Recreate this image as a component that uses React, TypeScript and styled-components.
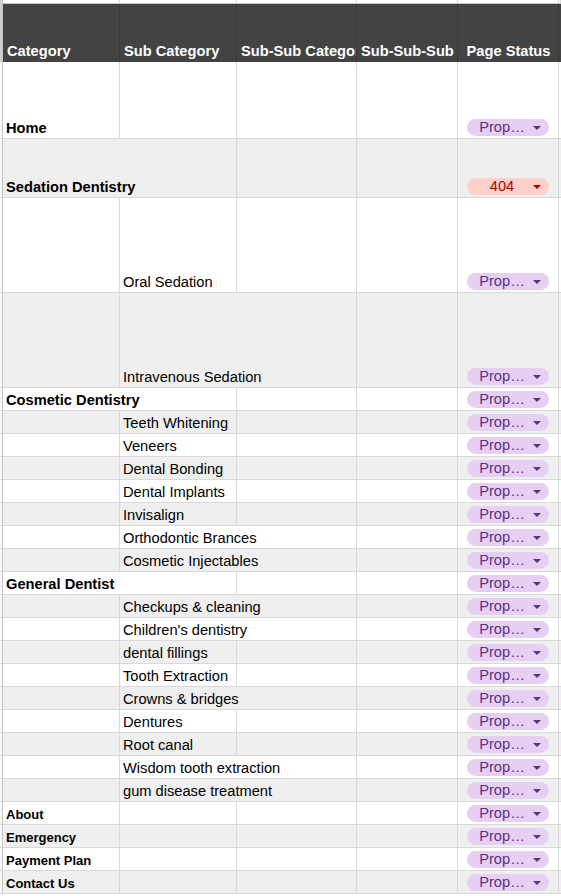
import React from 'react';
import styled, { createGlobalStyle, css } from 'styled-components';

type Status = 'prop' | '404' | null;

type RowData = {
  cat?: string;
  sub?: string;
  span?: boolean; // text runs over the empty cell to its right
  small?: boolean;
  h?: number;
  status?: Status;
};

const rows: RowData[] = [
  { cat: 'Home', h: 77, status: 'prop' },
  { cat: 'Sedation Dentistry', span: true, h: 59, status: '404' },
  { sub: 'Oral Sedation', h: 95, status: 'prop' },
  { sub: 'Intravenous Sedation', span: true, h: 95, status: 'prop' },
  { cat: 'Cosmetic Dentistry', span: true, status: 'prop' },
  { sub: 'Teeth Whitening', status: 'prop' },
  { sub: 'Veneers', status: 'prop' },
  { sub: 'Dental Bonding', status: 'prop' },
  { sub: 'Dental Implants', status: 'prop' },
  { sub: 'Invisalign', status: 'prop' },
  { sub: 'Orthodontic Brances', span: true, status: 'prop' },
  { sub: 'Cosmetic Injectables', span: true, status: 'prop' },
  { cat: 'General Dentist', span: true, status: 'prop' },
  { sub: 'Checkups & cleaning', span: true, status: 'prop' },
  { sub: "Children's dentistry", span: true, status: 'prop' },
  { sub: 'dental fillings', status: 'prop' },
  { sub: 'Tooth Extraction', status: 'prop' },
  { sub: 'Crowns & bridges', span: true, status: 'prop' },
  { sub: 'Dentures', status: 'prop' },
  { sub: 'Root canal', status: 'prop' },
  { sub: 'Wisdom tooth extraction', span: true, status: 'prop' },
  { sub: 'gum disease treatment', span: true, status: 'prop' },
  { cat: 'About', small: true, status: 'prop' },
  { cat: 'Emergency', small: true, status: 'prop' },
  { cat: 'Payment Plan', small: true, status: 'prop' },
  { cat: 'Contact Us', small: true, status: 'prop' },
];

const App = () => {
  return (
    <>
      <GlobalStyle />
      <Sheet>
        <Row $h={4}>
          <Gutter $top />
          <TopCell />
          <TopCell />
          <TopCell />
          <TopCell />
          <TopCell />
          <TopCell />
        </Row>
        <Row $h={58}>
          <Gutter $top />
          <HeadCell>Category</HeadCell>
          <HeadCell>Sub Category</HeadCell>
          <HeadCell>Sub-Sub Category</HeadCell>
          <HeadCell>Sub-Sub-Sub</HeadCell>
          <HeadCell $center>Page Status</HeadCell>
          <HeadCell />
        </Row>
        {rows.map((r, i) => {
          const band = i % 2 === 1;
          return (
            <Row key={i} $h={r.h ?? 23}>
              <Gutter />
              {r.cat !== undefined ? (
                <>
                  <Cell $band={band} $bold $small={r.small} $span={r.span}>
                    {r.cat}
                  </Cell>
                  {!r.span && <Cell $band={band} />}
                  <Cell $band={band} />
                </>
              ) : (
                <>
                  <Cell $band={band} />
                  <Cell $band={band} $span={r.span}>
                    {r.sub}
                  </Cell>
                  {!r.span && <Cell $band={band} />}
                </>
              )}
              <Cell $band={band} />
              <Cell $band={band} $center>
                {r.status && <Chip status={r.status} />}
              </Cell>
              <Cell $band={band} />
            </Row>
          );
        })}
      </Sheet>
    </>
  );
};

const Chip = ({ status }: { status: Status }) => {
  const isErr = status === '404';
  return (
    <Pill $err={isErr}>
      <PillText>{isErr ? '404' : 'Prop…'}</PillText>
      <Arrow $err={isErr} />
    </Pill>
  );
};

export default App;

const GlobalStyle = createGlobalStyle`
  body {
    margin: 0;
    background: #fff;
    font-family: "Liberation Sans", Arial, sans-serif;
  }
`;

const Sheet = styled.div`
  width: 561px;
  overflow: hidden;
`;

const Row = styled.div<{ $h: number }>`
  display: grid;
  grid-template-columns: 3px 117px 117px 120px 101px 101px 2px;
  height: ${({ $h }) => $h}px;
`;

const Gutter = styled.div<{ $top?: boolean }>`
  background: ${({ $top }) => ($top ? '#cfcfcf' : '#f8f9fa')};
  border-right: 1px solid #c4c4c4;
  border-bottom: ${({ $top }) => ($top ? 'none' : '1px solid #d9d9d9')};
`;

const TopCell = styled.div`
  background: #fff;
  border-right: 1px solid #d9d9d9;
  border-bottom: 1px solid #c4c4c4;
`;

const HeadCell = styled.div<{ $center?: boolean }>`
  background: #434343;
  border-right: 1px solid #3b3b3b;
  color: #fff;
  font-weight: bold;
  font-size: 14.67px;
  line-height: 17px;
  padding: 0 3px 2px 4px;
  display: flex;
  align-items: flex-end;
  justify-content: ${({ $center }) => ($center ? 'center' : 'flex-start')};
  white-space: nowrap;
  overflow: hidden;
`;

const Cell = styled.div<{
  $band?: boolean;
  $bold?: boolean;
  $small?: boolean;
  $span?: boolean;
  $center?: boolean;
}>`
  background: ${({ $band }) => ($band ? '#efefef' : '#fff')};
  border-right: 1px solid #d9d9d9;
  border-bottom: 1px solid #d9d9d9;
  color: #000;
  font-size: 14.67px;
  line-height: 17px;
  padding: 0 3px 1px 3px;
  display: flex;
  align-items: flex-end;
  white-space: nowrap;
  overflow: hidden;
  font-weight: ${({ $bold }) => ($bold ? 'bold' : 'normal')};
  ${({ $small }) =>
    $small &&
    css`
      font-size: 13px;
    `}
  ${({ $span }) =>
    $span &&
    css`
      grid-column: span 2;
    `}
  ${({ $center }) =>
    $center &&
    css`
      justify-content: center;
      padding: 0 0 2px 0;
    `}
`;

const Pill = styled.div<{ $err?: boolean }>`
  display: flex;
  align-items: center;
  width: 82px;
  height: 17px;
  box-sizing: border-box;
  padding: 0 8px 0 10px;
  border-radius: 9px;
  background: ${({ $err }) => ($err ? '#ffcfc9' : '#e6cff2')};
  color: ${({ $err }) => ($err ? '#b10202' : '#5a3286')};
  font-size: 14.67px;
  font-weight: normal;
  line-height: 17px;
`;

const PillText = styled.span`
  flex: 1;
  text-align: center;
  white-space: nowrap;
  overflow: hidden;
`;

const Arrow = styled.span<{ $err?: boolean }>`
  width: 0;
  height: 0;
  margin-left: 6px;
  border-left: 4px solid transparent;
  border-right: 4px solid transparent;
  border-top: 4px solid ${({ $err }) => ($err ? '#b10202' : '#5a3286')};
`;
